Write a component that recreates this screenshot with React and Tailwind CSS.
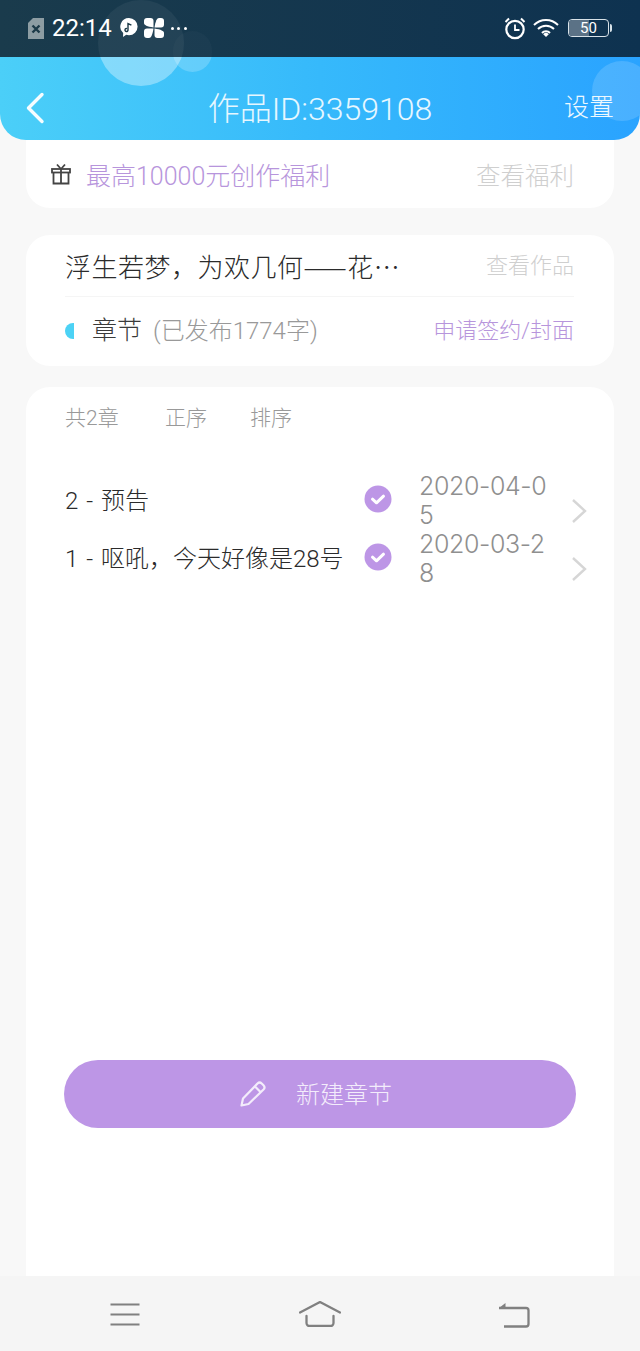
import React from "react";

function Check() {
  return (
    <svg width="28" height="28" viewBox="0 0 28 28" className="shrink-0 mb-[5px]">
      <circle cx="14" cy="14" r="13.5" fill="#bd96e6" />
      <path d="M8.5 14.2l4 3.6 7-6.6" fill="none" stroke="#fff" strokeWidth="3" strokeLinecap="round" strokeLinejoin="round" />
    </svg>
  );
}

function Chevron() {
  return (
    <svg width="16" height="26" viewBox="0 0 16 26" className="shrink-0 mt-[20px]">
      <path d="M2 2l12 11L2 24" fill="none" stroke="#d6d6d6" strokeWidth="2.4" />
    </svg>
  );
}

function Row({ title, date }) {
  return (
    <div className="flex items-center h-[58px] pl-[39px]">
      <div className="text-[24px] leading-[30px] text-[#2b2b2b] w-[299px] whitespace-nowrap [word-spacing:2px]">
        {title}
      </div>
      <Check />
      <div className="ml-[27px] w-[131px] h-[58px] font-['Inter'] text-[25px] leading-[29px] tracking-[-0.4px] text-[#8f8f8f] break-all">
        {date}
      </div>
      <div className="ml-[21px] flex"><Chevron /></div>
    </div>
  );
}

export default function App() {
  return (
    <div className="relative w-[640px] h-[1351px] flex flex-col overflow-hidden bg-[#f8f8f8] font-light font-['Roboto','Noto_Sans_CJK_SC',sans-serif]">
      {/* status bar */}
      <div className="relative overflow-hidden h-[57px] shrink-0 flex items-center justify-between pl-[28px] pr-[28px] pb-[1px] bg-gradient-to-r from-[#1a3b4c] to-[#0e3250] text-white font-normal">
        <div className="absolute left-[98px] top-0 w-[86px] h-[86px] rounded-full bg-white/[0.05]" />
        <div className="absolute left-[173px] top-[31px] w-[39px] h-[41px] rounded-full bg-white/[0.025]" />
        <div className="relative flex items-center">
          <svg width="16" height="21" viewBox="0 0 16 21">
            <path d="M5 0h11v21H0V5z" fill="#8d9da3" />
            <path d="M4.5 7.5l7 7m0-7l-7 7" stroke="#1c3a48" strokeWidth="2.4" />
          </svg>
          <span className="ml-[8px] text-[24px] leading-none">22:14</span>
          <svg width="18" height="20" viewBox="0 0 18 20" className="ml-[8px]">
            <path d="M9 0a8.600 8.600 0 0 1 0 17.200c-1 0-2 0-2.800-.4L3 19l.2-4A8.600 8.600 0 0 1 9 0z" fill="#fff" />
            <path d="M8 12V5.500l3.400 1.600M8 12a1.500 1.500 0 1 1-1-1.400" fill="none" stroke="#1c3a48" strokeWidth="1.400" />
          </svg>
          <svg width="20" height="20" viewBox="0 0 20 20" className="ml-[6px]">
            <g fill="#fff">
              <path d="M9.500 9.500V3A3 3 0 0 0 6.500 0H3A3 3 0 0 0 0 3v2c0 2 3 3.500 9.500 4.500z" />
              <path d="M10.500 9.500H17A3 3 0 0 0 20 6.500V3A3 3 0 0 0 17 0h-2c-2 0-3.500 3-4.500 9.500z" />
              <path d="M10.500 10.500V17a3 3 0 0 0 3 3H17a3 3 0 0 0 3-3v-2c0-2-3-3.500-9.500-4.500z" />
              <path d="M9.500 10.500H3a3 3 0 0 0-3 3V17a3 3 0 0 0 3 3h2c2 0 3.500-3 4.500-9.500z" />
            </g>
          </svg>
          <div className="ml-[7px] flex gap-[3.500px]">
            <span className="w-[3px] h-[3px] rounded-full bg-white" />
            <span className="w-[3px] h-[3px] rounded-full bg-white" />
            <span className="w-[3px] h-[3px] rounded-full bg-white" />
          </div>
        </div>
        <div className="relative flex items-center">
          <svg width="22" height="23" viewBox="0 0 22 23">
            <circle cx="11" cy="12.500" r="8.700" fill="none" stroke="#fff" strokeWidth="2.200" />
            <path d="M11 7.500v5.500h4.500" fill="none" stroke="#fff" strokeWidth="1.800" />
            <path d="M1.500 5L5 1.500M20.500 5L17 1.500" stroke="#fff" strokeWidth="2" />
          </svg>
          <svg width="26" height="20" viewBox="0 0 26 20" className="ml-[7px]">
            <g fill="none" stroke="#fff" strokeWidth="2">
              <path d="M1 7a17 17 0 0 1 24 0" />
              <path d="M5 11a11.500 11.500 0 0 1 16 0" />
              <path d="M9 15a5.500 5.500 0 0 1 8 0" />
            </g>
            <path d="M13 19l-2.800-2.800a4 4 0 0 1 5.600 0z" fill="#fff" />
          </svg>
          <div className="ml-[9px] relative w-[41px] h-[18px] rounded-[4px] border border-[#d8e2e8] overflow-hidden flex items-center justify-center">
            <div className="absolute left-0 top-0 bottom-0 w-[20px] bg-[#5b7286]" />
            <span className="relative text-[15px] leading-none text-white">50</span>
          </div>
          <div className="ml-[1px] w-[2px] h-[8px] rounded-r-sm bg-[#d8e2e8]" />
        </div>
      </div>

      {/* header */}
      <div className="relative overflow-hidden h-[83px] shrink-0 flex items-center pt-[18px] pl-[25px] pr-[26px] rounded-b-[26px] bg-gradient-to-r from-[#4bcff8] via-[#36b9fb] to-[#2aa3ff] text-white">
        <div className="absolute left-[98px] -top-[57px] w-[86px] h-[86px] rounded-full bg-white/35" />
        <div className="absolute left-[173px] -top-[26px] w-[39px] h-[41px] rounded-full bg-white/20" />
        <div className="absolute left-[592px] top-[4px] w-[60px] h-[60px] rounded-full bg-white/15" />
        <div className="relative w-[81px]">
          <svg width="20" height="32" viewBox="0 0 20 32" className="block">
            <path d="M17 2.500L3.500 16 17 29.500" fill="none" stroke="#fff" strokeWidth="3.400" strokeLinecap="round" strokeLinejoin="round" opacity="0.95" />
          </svg>
        </div>
        <div className="relative flex-1 text-center text-[32px] leading-[40px] pt-[2px] whitespace-nowrap text-[#e6f7ff]">作品ID:3359108</div>
        <div className="relative w-[80px] text-right text-[25px] leading-[34px] text-[#eef9ff]">设置</div>
      </div>

      {/* content */}
      <div className="flex-1 flex flex-col min-h-0 px-[26px]">
        <div className="h-[68px] shrink-0 flex items-center justify-between pl-[25px] pr-[40px] bg-white rounded-b-[24px]">
          <div className="flex items-center">
            <svg width="20" height="22" viewBox="0 0 20 22">
              <g fill="none" stroke="#444" strokeWidth="1.800">
                <rect x="1" y="6" width="18" height="3.500" />
                <path d="M2.500 9.500V20.500H17.500V9.500M10 6V20.500M10 6L6 1.500M10 6l4-4.500" />
              </g>
            </svg>
            <span className="ml-[15px] pt-[5px] text-[25px] leading-[32px] text-[#b795dc]">最高10000元创作福利</span>
          </div>
          <span className="pt-[5px] text-[24.500px] leading-[32px] text-[#cfcfcf]">查看福利</span>
        </div>

        <div className="mt-[27px] h-[131px] shrink-0 bg-white rounded-[24px] pl-[39px] pr-[40px]">
          <div className="h-[62px] flex items-center justify-between border-b border-[#f5f5f5]">
            <span className="text-[26px] leading-[32px] tracking-[0.5px] text-[#2b2b2b] whitespace-nowrap font-['Noto_Sans_CJK_SC',sans-serif]">浮生若梦，为欢几何——花⋯</span>
            <span className="text-[22px] leading-[32px] text-[#cfcfcf]">查看作品</span>
          </div>
          <div className="h-[68px] flex items-center justify-between">
            <div className="flex items-center">
              <span className="w-[9px] h-[16px] rounded-l-full bg-[#4cd2f5]" />
              <span className="ml-[18px] text-[25px] leading-[32px] text-[#3a3a3a]">章节</span>
              <span className="ml-[11px] text-[24px] leading-[32px] text-[#999999]">(已发布1774字)</span>
            </div>
            <span className="text-[22px] leading-[32px] text-[#b795dc]">申请签约/封面</span>
          </div>
        </div>

        <div className="mt-[21px] flex-1 min-h-0 flex flex-col bg-white rounded-t-[24px]">
          <div className="flex pl-[39px] pt-[16px] text-[21px] leading-[30px] text-[#999999]">
            <span className="w-[100px]">共2章</span>
            <span className="w-[85px]">正序</span>
            <span>排序</span>
          </div>
          <div className="mt-[39px]">
            <Row title="2 - 预告" date="2020-04-05" />
            <Row title="1 - 呕吼，今天好像是28号" date="2020-03-28" />
          </div>
          <div className="mt-[472px] mx-[38px] h-[68px] rounded-full bg-[#bd96e6] flex items-center justify-center pr-[9px] text-white">
            <svg width="28" height="28" viewBox="0 0 28 28">
              <path d="M2.500 25.500l1.500-7L18.500 3.500a3 3 0 0 1 4.200 0l1.800 1.800a3 3 0 0 1 0 4.200L9.500 24z M16 6.500l5.500 5.500" fill="none" stroke="#f3ecfb" strokeWidth="2.200" strokeLinejoin="round" />
            </svg>
            <span className="ml-[29px] pt-[2px] text-[24px] leading-[32px] text-[#f3ecfb]">新建章节</span>
          </div>
        </div>
      </div>

      {/* nav bar */}
      <div className="h-[75px] shrink-0 bg-[#f5f5f5] flex items-center justify-between pl-[110px] pr-[110px]">
        <svg width="30" height="24" viewBox="0 0 30 24">
          <path d="M0.500 2.500h29M0.500 12.500h29M0.500 22.500h29" stroke="#808080" strokeWidth="2.200" />
        </svg>
        <svg width="42" height="26" viewBox="0 0 42 26" className="ml-[2px]">
          <path d="M1 11.500L21 1l20 10.500M7.500 15v7a3 3 0 0 0 3 3h21a3 3 0 0 0 3-3v-7" fill="none" stroke="#808080" strokeWidth="2.300" strokeLinecap="round" />
        </svg>
        <svg width="32" height="26" viewBox="0 0 32 26" className="mt-[2px]">
          <path d="M1 6H28a2.500 2.500 0 0 1 2.500 2.500V22a2.500 2.500 0 0 1-2.500 2.500H6" fill="none" stroke="#808080" strokeWidth="2.300" />
          <path d="M7.500 1L1 6h6.500z" fill="#808080" />
        </svg>
      </div>
    </div>
  );
}
